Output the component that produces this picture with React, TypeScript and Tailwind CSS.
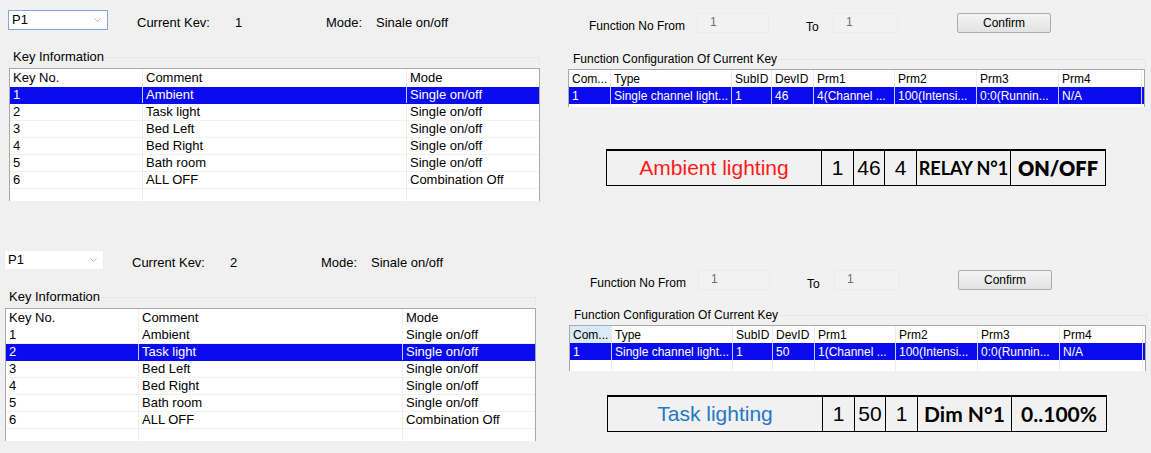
import clsx from 'clsx'

const ui = "font-['Liberation_Sans',Arial,sans-serif]"

const keyRows = [
  ['1', 'Ambient', 'Single on/off'],
  ['2', 'Task light', 'Single on/off'],
  ['3', 'Bed Left', 'Single on/off'],
  ['4', 'Bed Right', 'Single on/off'],
  ['5', 'Bath room', 'Single on/off'],
  ['6', 'ALL OFF', 'Combination Off'],
]

const funcHead = ['Com...', 'Type', 'SubID', 'DevID', 'Prm1', 'Prm2', 'Prm3', 'Prm4']
const funcCols = ['w-[42px]', 'w-[121px]', 'w-[40px]', 'w-[42px]', 'w-[81px]', 'w-[82px]', 'w-[82px]', 'w-[83px]']

function Combo({ focused }: { focused?: boolean }) {
  return (
    <div
      className={clsx(
        'flex h-[20px] w-[100px] items-center justify-between bg-white pl-[3px] pr-[6px] text-[13px] text-black',
        focused ? 'border border-[#7ca9dc]' : 'border border-[#ededed]'
      )}
    >
      P1
      <svg width="7" height="4" viewBox="0 0 7 4">
        <path d="M0.5 0.5 L3.5 3.5 L6.5 0.5" fill="none" stroke="#b8b8b8" />
      </svg>
    </div>
  )
}

function KeyPanel({ focused, current, selected, bottom }: { focused?: boolean; current: string; selected: number; bottom?: boolean }) {
  const cols = bottom ? ['w-[133px]', 'w-[264px]', 'w-[131px]'] : ['w-[133px]', 'w-[264px]', 'w-[132px]']
  return (
    <div className={clsx('h-[240px] pt-[10px]', bottom ? 'pl-[4px]' : 'pl-[8px]')}>
      <div className="flex items-start text-[13px] leading-[16px] text-black">
        <Combo focused={focused} />
        <span className={clsx('mt-[5px] w-[98px]', bottom ? 'ml-[28px]' : 'ml-[29px]')}>Current Kev:</span>
        <span className="mt-[5px] w-[91px]">{current}</span>
        <span className="mt-[5px] w-[50px]">Mode:</span>
        <span className="mt-[5px]">Sinale on/off</span>
      </div>
      <div className="mt-[18px] flex w-[532px] items-center text-[13px] leading-[16px]">
        <span className="shrink-0 whitespace-nowrap pl-[5px] pr-[2px]">Key Information</span>
        <div className="mt-[8px] h-[8px] flex-1 border-r border-t border-[#e6e6e6]" />
      </div>
      <div className="ml-[1px] mt-[3px] w-[531px] border-l border-r border-t border-[#a8a8a8] bg-white text-[13px] text-black">
        <div className="flex h-[18px]">
          {['Key No.', 'Comment', 'Mode'].map((h, i) => (
            <div key={h} className={clsx(cols[i], 'flex items-center border-r border-[#ededed] pl-[3px] last:border-r-0')}>
              {h}
            </div>
          ))}
        </div>
        {keyRows.map((r, ri) => (
          <div
            key={r[0]}
            className={clsx('flex h-[17px] border-b', ri === selected ? 'border-[#0b0bef] bg-[#0b0bef] text-white' : 'border-[#f1f1f1]')}
          >
            {r.map((c, i) => (
              <div
                key={i}
                className={clsx(
                  cols[i],
                  'flex items-center whitespace-nowrap border-r pl-[3px] last:border-r-0',
                  ri === selected ? 'border-[#c9c9f5]' : 'border-[#ededed]'
                )}
              >
                {c}
              </div>
            ))}
          </div>
        ))}
        <div className="flex h-[12px]">
          {cols.map((c, i) => (
            <div key={i} className={clsx(c, 'border-r border-[#ededed] last:border-r-0')} />
          ))}
        </div>
      </div>
    </div>
  )
}

function FuncPanel({
  row,
  bottom,
  box,
}: {
  row: string[]
  bottom?: boolean
  box: { label: string; color: string; dev: string; prm: string; kind: string; range: string }
}) {
  return (
    <div className={clsx('pt-[13px]', bottom ? 'h-[196px] pl-[1px]' : 'h-[257px]')}>
      <div className="flex items-start pl-[29px] text-[12px] leading-[14px] text-black">
        <span className="mt-[6px] w-[108px] whitespace-nowrap">Function No From</span>
        <div className="h-[20px] w-[72px] border border-[#ebebeb] bg-[#f2f2f2] pl-[12px] pt-[1px] text-[#707070]">1</div>
        <span className="ml-[37px] mt-[7px] w-[27px]">To</span>
        <div className="h-[20px] w-[65px] border border-[#ebebeb] bg-[#f2f2f2] pl-[12px] pt-[1px] text-[#707070]">1</div>
        <button className="ml-[59px] flex h-[20px] w-[94px] items-center justify-center rounded-[2px] border border-[#acacac] bg-gradient-to-b from-[#f4f4f4] to-[#e2e2e2] text-[12px] text-black">
          Confirm
        </button>
      </div>
      <div className={clsx('flex w-[586px] items-center text-[12px] leading-[14px] text-black', bottom ? 'mt-[16px]' : 'mt-[17px]')}>
        <span className="shrink-0 whitespace-nowrap pl-[13px] pr-[2px]">Function Configuration Of Current Key</span>
        <div className="mt-[8px] h-[8px] flex-1 border-r border-t border-[#e6e6e6]" />
      </div>
      <div className="ml-[8px] mt-[2px] w-[577px] border-l border-r border-t border-[#a8a8a8] bg-white text-[12px] text-black">
        <div className="flex h-[17px]">
          {funcHead.map((h, i) => (
            <div
              key={h}
              className={clsx(
                funcCols[i],
                'flex items-center border-r border-[#ededed] pl-[3px]',
                bottom && i === 0 && 'bg-[#d9ebf9]'
              )}
            >
              {h}
            </div>
          ))}
        </div>
        <div className="flex h-[17px] bg-[#0b0bef] text-white">
          {row.map((c, i) => (
            <div key={i} className={clsx(funcCols[i], 'flex items-center overflow-hidden whitespace-nowrap border-r border-[#c9c9f5] pl-[3px]')}>
              {c}
            </div>
          ))}
        </div>
        <div className={clsx('flex', bottom ? 'h-[11px]' : 'h-[3px]')}>
          {funcCols.map((c, i) => (
            <div key={i} className={clsx(c, 'border-r border-[#ededed]')} />
          ))}
        </div>
      </div>
      <div
        className={clsx(
          'ml-[46px] flex h-[37px] w-[500px] border border-t-2 border-black text-black',
          bottom ? 'mt-[24px]' : 'mt-[42px]'
        )}
      >
        <div className={clsx('flex w-[215px] items-center justify-center border-r border-black text-[21px]', ui, box.color)}>
          {box.label}
        </div>
        <div className={clsx('flex w-[32px] items-center justify-center border-r border-black text-[21px]', ui)}>1</div>
        <div className={clsx('flex w-[31px] items-center justify-center border-r border-black text-[21px]', ui)}>{box.dev}</div>
        <div className={clsx('flex w-[32px] items-center justify-center border-r border-black text-[21px]', ui)}>{box.prm}</div>
        <div
          className={clsx(
            "flex w-[94px] items-center justify-center whitespace-nowrap border-r border-black font-['Lato',sans-serif] font-bold",
            bottom ? 'text-[21px]' : 'text-[18px]'
          )}
        >
          {box.kind}
        </div>
        <div
          className={clsx(
            "flex flex-1 items-center justify-center whitespace-nowrap font-['Lato',sans-serif]",
            bottom ? 'text-[21px] font-bold' : 'text-[20px] font-extrabold'
          )}
        >
          {box.range}
        </div>
      </div>
    </div>
  )
}

export default function App() {
  return (
    <div className={clsx('flex h-[453px] w-[1151px] overflow-hidden bg-[#f0f0f0]', ui)}>
      <div className="w-[560px] shrink-0">
        <KeyPanel focused current="1" selected={0} />
        <KeyPanel current="2" selected={1} bottom />
      </div>
      <div className="w-[591px] shrink-0 bg-[#f1f1f1]">
        <FuncPanel
          row={['1', 'Single channel light...', '1', '46', '4(Channel ...', '100(Intensi...', '0:0(Runnin...', 'N/A']}
          box={{ label: 'Ambient lighting', color: 'text-[#ff1a1a]', dev: '46', prm: '4', kind: 'RELAY N°1', range: 'ON/OFF' }}
        />
        <FuncPanel
          bottom
          row={['1', 'Single channel light...', '1', '50', '1(Channel ...', '100(Intensi...', '0:0(Runnin...', 'N/A']}
          box={{ label: 'Task lighting', color: 'text-[#2577c6]', dev: '50', prm: '1', kind: 'Dim N°1', range: '0..100%' }}
        />
      </div>
    </div>
  )
}
